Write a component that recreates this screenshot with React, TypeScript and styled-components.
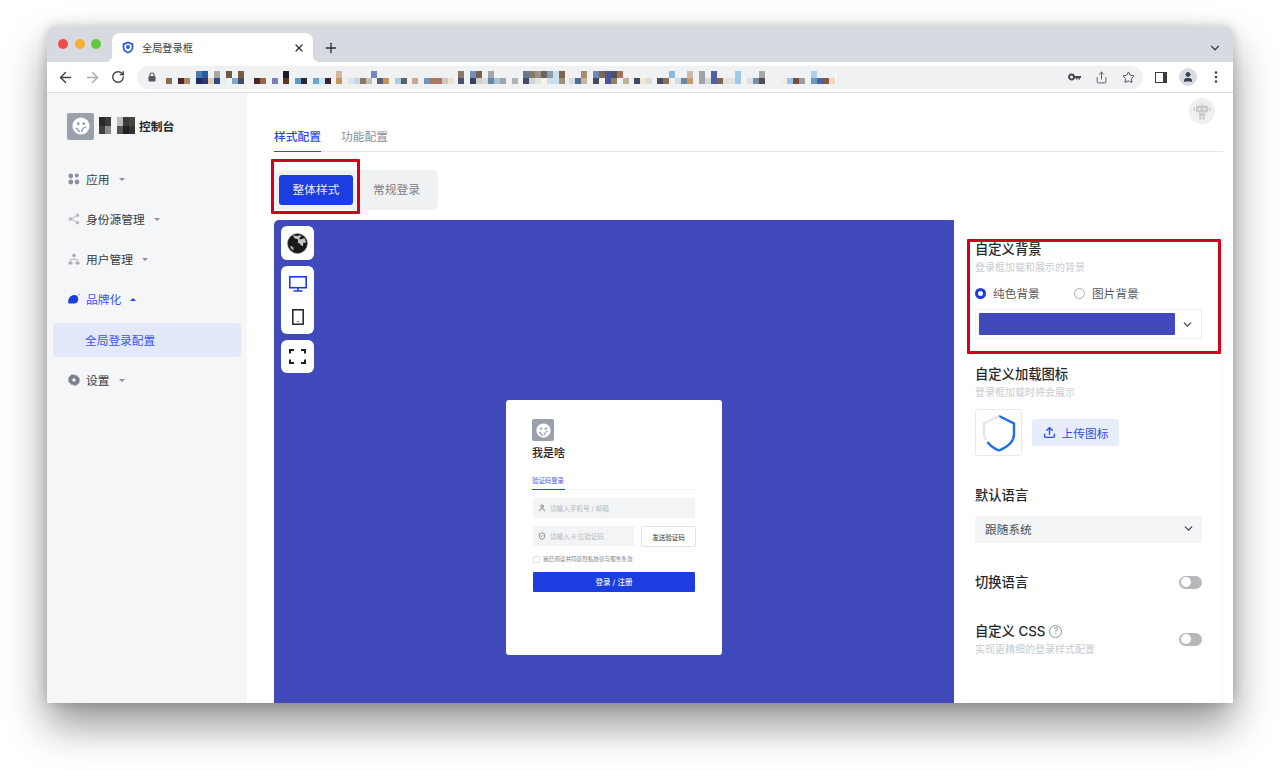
import React from 'react';
import styled, { createGlobalStyle } from 'styled-components';
import { ArrowLeft, ArrowRight, RotateCw, Share, Star, ChevronDown, Plus, X, Upload, User, ShieldCheck } from 'lucide-react';

const Global = createGlobalStyle`
  html, body { margin: 0; padding: 0; background: #fff; }
  body { font-family: "Inter", "Noto Sans CJK SC", sans-serif; }
  * { box-sizing: border-box; }
`;

const Page = styled.div`
  width: 1280px; height: 770px; padding: 27px 47px 67px; background: #fff; overflow: hidden;
`;
const Win = styled.div`
  position: relative; width: 1186px; height: 676px; border-radius: 7px 7px 0 0; overflow: hidden;
  display: flex; flex-direction: column; background: #fff;
`;
const Shadow = styled.div`
  border-radius: 7px; box-shadow: 0 22px 42px rgba(0,0,0,.42), 0 0 12px rgba(0,0,0,.2);
`;
const TabStrip = styled.div`
  height: 35px; background: #d7dae0; display: flex; align-items: flex-end; padding-left: 65px; position: relative; flex: none;
`;
const Lights = styled.div`
  position: absolute; left: 11px; top: 12px; display: flex; gap: 6.7px;
`;
const Light = styled.span<{ $c: string }>`
  width: 10px; height: 10px; border-radius: 50%; background: ${p => p.$c};
`;
const ChromeTab = styled.div`
  position: relative; width: 201px; height: 29px; background: #fff; border-radius: 8px 8px 0 0; display: flex; align-items: center;
  padding: 0 8px 0 10px; font-size: 10.2px; color: #3c4043;
  span { margin-left: 8px; flex: 1; }
  &::before, &::after { content: ''; position: absolute; bottom: 0; width: 7px; height: 7px; }
  &::before { left: -7px; background: radial-gradient(circle at 0 0, transparent 7px, #fff 7.5px); }
  &::after { right: -7px; background: radial-gradient(circle at 100% 0, transparent 7px, #fff 7.5px); }
`;
const NewTab = styled.div`
  width: 36px; height: 29px; display: flex; align-items: center; justify-content: center; color: #2b2e33;
`;
const StripEnd = styled.div`
  position: absolute; right: 11px; top: 14px; color: #3c4043; display: flex;
`;
const Toolbar = styled.div`
  height: 31px; background: #fff; border-bottom: 1px solid #dadce0; display: flex; align-items: center; padding-left: 10px; flex: none; color: #45484d;
`;
const NavBtn = styled.div<{ $dim?: boolean }>`
  width: 27px; display: flex; color: ${p => (p.$dim ? '#a9acb1' : '#3f4247')};
`;
const Omni = styled.div`
  width: 1006px; height: 23px; margin-left: -1px; border-radius: 12px; background: #eff1f3; display: flex; align-items: center; padding: 0 8px 0 11px;
`;
const Mosaic = styled.svg`
  margin-left: 8px; flex: none;
`;
const OmniRight = styled.div`
  margin-left: auto; display: flex; gap: 14px; align-items: center; color: #484b50;
`;
const Panel = styled.div`
  margin-left: 12px; display: flex; align-items: center; color: #3c4043;
`;
const PanelIcon = styled.div`
  width: 12px; height: 11px; border: 1.5px solid #3a3d42; border-right-width: 4px; background: #fff;
`;
const Avatar = styled.div`
  width: 18px; height: 18px; border-radius: 50%; background: #d9dce3; margin-left: 12px; display: flex; align-items: center; justify-content: center; color: #37404f;
`;
const Dots = styled.svg`
  margin-left: 12px; flex: none;
`;
const Body = styled.div`
  flex: 1; display: flex; min-height: 0;
`;
const Side = styled.aside`
  width: 200px; background: #f4f6f8; padding: 19px 6px 0 6px; flex: none;
`;
const Brand = styled.div`
  display: flex; align-items: center; height: 28px; padding-left: 14px; margin-bottom: 19px; font-size: 11.8px; font-weight: 700; color: #23262b;
`;
const BrandText = styled.span`
  padding-bottom: 2px;
`;
const LogoBox = styled.div<{ $s: number; $offset?: boolean }>`
  width: ${p => p.$s}px; height: ${p => p.$s}px; border-radius: 2px; background: #9ba1ab; display: flex; align-items: center; justify-content: center; flex: none;
  margin-left: ${p => (p.$offset ? '-1px' : '0')};
`;
const BrandMosaic = styled.svg`
  margin: 0 4px 0 5px;
`;
const MenuItem = styled.div<{ $active?: boolean }>`
  height: 40px; display: flex; align-items: center; padding-left: 15px; font-size: 11.75px;
  color: ${p => (p.$active ? '#3a57e8' : '#3a3d42')};
`;
const MenuText = styled.span`
  padding-bottom: 2px;
`;
const MenuIcon = styled.svg`
  width: 12px; height: 12px; margin-right: 6px; flex: none;
`;
const Caret = styled.span<{ $up?: boolean; $c?: string }>`
  width: 0; height: 0; margin-left: 9px; border-left: 3px solid transparent; border-right: 3px solid transparent;
  ${p => (p.$up ? `border-bottom: 3px solid ${p.$c || '#2a48e0'};` : `border-top: 3px solid ${p.$c || '#8a8f99'};`)}
`;
const SubItem = styled.div`
  height: 34px; margin-top: 4px; margin-bottom: 3px; border-radius: 4px; background: #e3e9fb; color: #3a57e8; font-size: 11.7px; display: flex; align-items: center; padding: 0 0 2px 32px;
`;
const Main = styled.main`
  flex: 1; min-width: 0; position: relative; padding: 34px 10px 0 27px; overflow: hidden;
`;
const RobotBadge = styled.div`
  position: absolute; right: 18px; top: 5px; width: 26px; height: 26px; border-radius: 50%; background: #f0f0f0; display: flex; align-items: center; justify-content: center;
`;
const Tabs = styled.div`
  display: flex; gap: 20px; border-bottom: 1px solid #e4e6ea; height: 25px; font-size: 11.75px; color: #8c9099;
`;
const TabLabel = styled.div<{ $active?: boolean }>`
  height: 25px; line-height: 21px; font-weight: ${p => (p.$active ? 500 : 400)};
  color: ${p => (p.$active ? '#2a48e0' : '#8c9099')};
  border-bottom: ${p => (p.$active ? '1.5px solid #2a48e0' : 'none')};
`;
const Segments = styled.div`
  display: flex; margin-top: 18px; height: 40px; padding: 5px 0 5px 5px; background: #f0f1f3; border-radius: 6px; width: 164px;
`;
const SegBtn = styled.div<{ $active?: boolean }>`
  flex: none; width: ${p => (p.$active ? 74 : 87)}px; display: flex; align-items: center; justify-content: center; border-radius: 3px; font-size: 11.75px; padding-bottom: 4px;
  background: ${p => (p.$active ? '#1c3de0' : 'transparent')}; color: ${p => (p.$active ? '#e8ecff' : '#7c8087')};
`;
const Workspace = styled.div`
  display: flex; margin-top: 10px; width: 949px; height: 615px; border-radius: 5px 5px 0 0; overflow: hidden;
`;
const Preview = styled.div`
  position: relative; width: 680px; background: #414abb; display: flex; align-items: center; justify-content: center;
`;
const ToolCol = styled.div`
  position: absolute; left: 7px; top: 6px; display: flex; flex-direction: column; gap: 6px;
`;
const ToolBtn = styled.div<{ $h?: number }>`
  width: 33px; height: ${p => p.$h || 34}px; background: #fff; border-radius: 6px; display: flex; flex-direction: column; align-items: center; justify-content: center;
`;
const DeviceStack = styled.div`
  display: flex; flex-direction: column; align-items: center; gap: 17px;
`;
const Card = styled.div`
  width: 216px; height: 255px; background: #fff; border-radius: 3px; padding: 19px 26px 0 27px;
`;
const CardTitle = styled.div`
  margin: 4px 0 0 -1px; font-size: 11px; font-weight: 500; color: #1f2126; line-height: 16px; height: 16px;
`;
const CardTab = styled.div`
  margin: 9px 0 0 -1px; height: 20px; border-bottom: 1px solid #f3f4f6; font-size: 6.4px; color: #4a5ae6; white-space: nowrap;
  span { display: inline-block; height: 20px; line-height: 23px; border-bottom: 1px solid #2a48e0; width: 33px; }
`;
const CardInput = styled.div<{ $w?: number }>`
  width: ${p => p.$w || 162}px; height: 20px; background: #f3f4f6; border-radius: 1px; display: flex; align-items: center; padding-left: 5px; gap: 4px;
  font-size: 6.6px; color: #b6b9bf; flex: none;
`;
const CardRow = styled.div`
  display: flex; gap: 7px; margin-top: 8px;
`;
const SendBtn = styled.div`
  width: 55px; height: 21px; border: 1px solid #e2e3e6; border-radius: 2px; display: flex; align-items: center; justify-content: center; font-size: 6.5px; color: #33363b; flex: none;
`;
const FirstInput = styled(CardInput)`
  margin-top: 8px;
`;
const Agree = styled.div`
  margin-top: 8px; height: 8px; display: flex; align-items: center; gap: 3px; font-size: 5.6px; color: #7d8087;
`;
const Check = styled.span`
  width: 7px; height: 7px; border: 1px solid #e2e3e6; border-radius: 1px; background: #fff;
`;
const CardSubmit = styled.div`
  margin-top: 9px; width: 162px; height: 20px; background: #1c3de0; border-radius: 1px; color: #f0f2ff; font-size: 7.5px; font-weight: 500; display: flex; align-items: center; justify-content: center; padding-bottom: 1px;
`;
const Settings = styled.div`
  flex: 1; background: #fff; border-right: 1px solid #f4f5f7; padding: 20px 20px 0 21px; position: relative;
`;
const Section = styled.section<{ $mt?: number }>`
  margin-top: ${p => p.$mt || 0}px;
`;
const H = styled.div`
  font-size: 13.3px; font-weight: 500; color: #25282d; line-height: 18px; height: 18px; display: flex; align-items: center; gap: 4px;
`;
const Hint = styled.div`
  margin-top: 2px; font-size: 10px; color: #c8cbd1; line-height: 14px; height: 14px;
`;
const Radios = styled.div`
  display: flex; margin-top: 12px; height: 14px; align-items: center; font-size: 11.7px; color: #55585e;
`;
const Radio = styled.span<{ $on?: boolean }>`
  width: 11px; height: 11px; border-radius: 50%; flex: none; margin-right: 7px; background: #fff;
  border: ${p => (p.$on ? '3px solid #1c3de0' : '1px solid #a8abb3')};
`;
const RadioLabel = styled.span`
  width: 81px; height: 14px; line-height: 16px;
`;
const ColorSelect = styled.div`
  margin-top: 9px; height: 30px; border: 1px solid #eceef1; border-radius: 3px; display: flex; align-items: center; padding: 0 7px 0 3px; color: #3c4250; justify-content: space-between;
`;
const Swatch = styled.div`
  width: 196px; height: 22px; background: #414abb; border-radius: 1px;
`;
const UploadRow = styled.div`
  display: flex; align-items: center; gap: 10px; margin-top: 10px;
`;
const IconBox = styled.div`
  width: 47px; height: 47px; border: 1px solid #e8e9ec; border-radius: 3px; display: flex; align-items: center; justify-content: center;
`;
const UploadBtn = styled.div`
  width: 87px; height: 27px; border-radius: 3px; background: #e8edfb; color: #2f4de2; font-size: 11.7px; display: flex; align-items: center; justify-content: center; gap: 6px; padding-bottom: 1px;
`;
const LangSelect = styled.div`
  margin-top: 12px; height: 27px; background: #f4f5f7; border-radius: 3px; display: flex; align-items: center; justify-content: space-between; padding: 0 7px 2px 10px; font-size: 11.7px; color: #4a4d53;
`;
const SwitchRow = styled.div<{ $mt: number }>`
  margin-top: ${p => p.$mt}px; display: flex; align-items: center; justify-content: space-between;
`;
const Toggle = styled.span`
  width: 23px; height: 13px; border-radius: 7px; background: #b6b7ba; position: relative; display: block;
  &::after { content: ''; position: absolute; left: 1.5px; top: 1.5px; width: 10px; height: 10px; border-radius: 50%; background: #fff; }
`;
const Help = styled.span`
  width: 13px; height: 13px; border: 1px solid #8d9096; border-radius: 50%; font-size: 8.5px; color: #8d9096; display: inline-flex; align-items: center; justify-content: center; font-weight: 400;
`;
const RedFrame = styled.div<{ $l: number; $t: number; $w: number; $h: number }>`
  position: absolute; left: ${p => p.$l}px; top: ${p => p.$t}px; width: ${p => p.$w}px; height: ${p => p.$h}px;
  border: 3px solid #d0021b; border-radius: 1px; pointer-events: none;
`;

const Face = ({ s }: { s: number }) => (
  <svg width={s} height={s} viewBox="0 0 20 20">
    <circle cx="10" cy="10" r="9.5" fill="#fff" />
    <circle cx="7" cy="7.5" r="1.6" fill="#9ba1ab" />
    <circle cx="13" cy="7.5" r="1.6" fill="#9ba1ab" />
    <path d="M4 12.5c2 .3 3.5 1.3 4.2 4.5M16 11c-3 .3-5 2-5.2 5.8" fill="none" stroke="#9ba1ab" strokeWidth="1.6" />
  </svg>
);

const ShieldFav = () => (
  <svg width="12" height="13" viewBox="0 0 12 13">
    <path d="M6 .5 11.3 2.4v4.2c0 2.9-2.2 4.9-5.3 5.9C2.900 11.500.7 9.500.7 6.600V2.400Z" fill="#2557e6" />
    <path d="M6 2.400 9.600 3.700v2.900c0 2-1.500 3.400-3.600 4.100-2.100-.7-3.600-2.100-3.600-4.100V3.700Z" fill="#fff" />
    <circle cx="6" cy="6" r="1.900" fill="#2557e6" />
  </svg>
);

const LockGlyph = () => (
  <svg width="8" height="10" viewBox="0 0 8 10" style={{ flex: 'none' }}>
    <path d="M2 4.500V3a2 2 0 0 1 4 0v1.500" fill="none" stroke="#55585d" strokeWidth="1.100" />
    <rect x="0.500" y="4" width="7" height="5.500" rx="1" fill="#55585d" />
  </svg>
);

const KeyGlyph = () => (
  <svg width="13" height="8" viewBox="0 0 13 8" fill="#484b50">
    <path fillRule="evenodd" d="M3.500.5a3.500 3.500 0 1 1-3.300 4.600A3.500 3.500 0 0 1 3.500.5Zm0 2a1.500 1.500 0 1 0 0 3 1.500 1.500 0 0 0 0-3Z" />
    <path d="M6.500 3H13v2h-1v1.500h-1.500V5H9.500v1.500H8V5H6.500Z" />
  </svg>
);

const Globe = () => (
  <svg width="21" height="21" viewBox="0 0 21 21">
    <circle cx="10.500" cy="10.500" r="10" fill="#181818" stroke="#8c8c8c" strokeWidth=".6" />
    <path d="M6 2.200c2 .5 3.400 1.200 4.300.8.900-.4 2.600-.9 4.100-.3-.7 1.500-2 1.700-1.900 3 .1 1 1.300 1 2 .3l3-.7c1 1.600 1.300 3.100 1.200 4.600-1 .6-1.600-.5-2.400.2-.8.700.5 2-.4 2.600-.8.500-1.700-.1-2.400-1.200-.8-1.200-2-1-2.600-2.200-.4-1 .6-1.600.2-2.500-.5-1-2.100-.3-3-1.200C7.300 4.700 6.300 3.700 6 2.200Z" fill="#c4c4c4" />
    <path d="M3 13c1.300-.3 2.700.3 3.400 1.400.6 1-.1 2-.1 3.300C4.700 16.700 3.500 15 3 13Z" fill="#a8a8a8" />
  </svg>
);

const MonitorGlyph = () => (
  <svg width="18" height="16" viewBox="0 0 18 16" fill="none" stroke="#1c3de0" strokeWidth="1.600">
    <rect x="0.800" y="0.800" width="16.400" height="10.900" />
    <path d="M9 11.700V15M4.500 15h9" />
  </svg>
);

const TabletGlyph = () => (
  <svg width="12" height="16" viewBox="0 0 12 16" fill="none" stroke="#1d1f22" strokeWidth="1.500">
    <rect x="0.800" y="0.800" width="10.400" height="14.400" />
    <circle cx="6" cy="12.500" r=".7" fill="#1d1f22" stroke="none" />
  </svg>
);

const Frame = () => (
  <svg width="17" height="15" viewBox="0 0 17 15" fill="none" stroke="#1d1f22" strokeWidth="2">
    <path d="M1 4.500V1h4M12 1h4v3.500M16 10.500V14h-4M5 14H1v-3.500" />
  </svg>
);

const Robot = () => (
  <svg width="18" height="18" viewBox="0 0 18 18" fill="#c9cbcd">
    <rect x="8.500" y="0.500" width="1" height="3" />
    <rect x="3" y="3.500" width="12" height="7" rx="1" />
    <rect x="0.500" y="5" width="1.500" height="4" />
    <rect x="16" y="5" width="1.500" height="4" />
    <rect x="6" y="11" width="6" height="3.500" />
    <rect x="6" y="15" width="2.500" height="2.500" />
    <rect x="9.500" y="15" width="2.500" height="2.500" />
    <circle cx="6.500" cy="7" r="1.100" fill="#f0f0f0" />
    <circle cx="11.500" cy="7" r="1.100" fill="#f0f0f0" />
  </svg>
);

const AppsIcon = () => (
  <MenuIcon viewBox="0 0 12 12" fill="#8b90a0">
    <circle cx="2.800" cy="3" r="2.400" /><circle cx="8.800" cy="2.600" r="2" /><circle cx="2.800" cy="9" r="2.400" /><circle cx="9" cy="9" r="2.400" />
  </MenuIcon>
);
const ShareIcon = () => (
  <MenuIcon viewBox="0 0 12 12" fill="none" stroke="#b5b9c2" strokeWidth="1">
    <path d="M9 2.500 3 6l6 3.500" />
    <circle cx="9.500" cy="2.300" r="1.300" fill="#b5b9c2" /><circle cx="2.500" cy="6" r="1.400" fill="#b5b9c2" /><circle cx="9.500" cy="9.700" r="1.300" fill="#b5b9c2" />
  </MenuIcon>
);
const OrgIcon = () => (
  <MenuIcon viewBox="0 0 12 12" fill="#a8acb6">
    <circle cx="6" cy="2.500" r="1.800" />
    <path d="M5.600 4.500h.8V6h3.300v2h-.8V6.800H2.900V8h-.8V6h3.500Z" />
    <rect x="0.500" y="8.500" width="4" height="3" rx="1" /><rect x="7.500" y="8.500" width="4" height="3" rx="1" />
  </MenuIcon>
);
const BrandIcon = () => (
  <MenuIcon viewBox="0 0 12 12" fill="#1c3de0">
    <path d="M.5 10.500c-1-3 .5-7.500 5-8.500 3-.5 5 1.500 4.700 4.500-.3 2.700-1.800 4-3.700 4Z" />
    <circle cx="11" cy="1.500" r="1" fill="#a8b4ee" />
  </MenuIcon>
);
const GearIcon = () => (
  <MenuIcon viewBox="0 0 12 12" fill="#7b808d">
    <path fillRule="evenodd" d="M6 .3 7.300 1.500l1.800-.2.700 1.700 1.700.7-.2 1.800L12 6l-.7 1.300.2 1.800-1.700.7-.7 1.700-1.800-.2L6 11.700 4.700 10.500l-1.800.2-.7-1.700L.5 8.300l.2-1.800L0 6l.7-1.300L.5 2.900l1.700-.7.7-1.700 1.800.2ZM6 4.300a1.700 1.700 0 1 0 0 3.400 1.700 1.700 0 0 0 0-3.400Z" />
  </MenuIcon>
);

type Cell = [number, number, number, number, string];
const url: Cell[] = [
  [166,78,6,6,'#8a6a4c'],[178,78,6,6,'#4a2a28'],[184,78,6,6,'#b08860'],
  [196,71,6,7,'#4a78b0'],[202,71,6,7,'#2a5aa0'],[196,78,6,6,'#1c2c58'],[202,78,6,6,'#2a3a70'],[208,78,6,6,'#e4cca8'],
  [214,71,6,7,'#a8a8a8'],[214,78,6,6,'#2a4a90'],[220,78,6,6,'#e8ecf0'],[226,71,6,7,'#6a5a48'],[232,78,6,6,'#80a8c8'],[238,71,6,7,'#7a5c40'],[238,78,6,6,'#404c6c'],
  [254,78,6,6,'#4a2428'],[260,78,6,6,'#9c6448'],[272,78,6,6,'#7880b8'],
  [283,71,6,7,'#1a1c28'],[283,78,6,6,'#5c3424'],[295,78,6,6,'#5c98c8'],[301,78,6,6,'#2c2830'],[313,78,6,6,'#6aa4d0'],[319,78,6,6,'#cde4f0'],[325,78,6,6,'#382430'],
  [336,71,6,7,'#d0b898'],[336,78,6,6,'#c09858'],[348,78,6,6,'#dce4ec'],[354,78,6,6,'#c8d8e8'],[360,78,6,6,'#8c7868'],[366,78,6,6,'#c8bcac'],
  [371,71,6,7,'#6c88bc'],[377,78,6,6,'#5c5c70'],[383,78,6,6,'#c0945c'],[395,78,6,6,'#a8cce4'],[401,78,6,6,'#606068'],
  [412,78,6,6,'#c8a890'],[424,78,6,6,'#7094c0'],[430,78,12,6,'#a87860'],[442,78,6,6,'#d0c8b8'],[448,78,6,6,'#ece4cc'],[458,71,6,7,'#8c7868'],[458,78,6,6,'#4c5070'],
  [470,71,6,7,'#7090c0'],[476,71,6,7,'#786048'],[470,78,6,6,'#3c4058'],[476,78,6,6,'#ccd0d0'],[482,78,6,6,'#dcdcd8'],
  [488,71,6,7,'#a0a8a8'],[488,78,6,6,'#6488ac'],[494,78,6,6,'#a8c4d4'],[500,78,6,6,'#a0a4a8'],[512,78,6,6,'#b0b4b0'],
  [523,71,6,7,'#647890'],[529,71,6,7,'#887868'],[535,71,6,7,'#9c9488'],[541,71,6,7,'#6c6060'],[547,71,6,7,'#8c9cb0'],[553,71,6,7,'#c8e0ec'],[559,71,6,7,'#7c6450'],
  [523,78,6,6,'#444868'],[529,78,6,6,'#d0d4d4'],[535,78,6,6,'#e4e4e0'],[541,78,6,6,'#f4f4e8'],[547,78,6,6,'#c8e0ec'],[553,78,6,6,'#c8e0ec'],[559,78,6,6,'#a09078'],
  [569,78,6,6,'#d0dce4'],[575,78,6,6,'#4c6c90'],[581,71,6,7,'#b08870'],[581,78,6,6,'#c8b498'],
  [593,71,6,7,'#7088b8'],[599,71,6,7,'#7c6850'],[605,71,6,7,'#4c5498'],[611,71,6,7,'#505058'],[617,71,6,7,'#a47058'],
  [593,78,6,6,'#444858'],[605,78,6,6,'#4c5498'],[611,78,6,6,'#8c8068'],[623,78,6,6,'#c0b098'],
  [634,78,6,6,'#404868'],[640,78,6,6,'#f0e8cc'],[646,78,6,6,'#e0dcd0'],
  [657,78,6,6,'#484c5c'],[663,78,6,6,'#887058'],[669,71,6,7,'#88b8e0'],[675,78,6,6,'#d0dce4'],[681,78,6,6,'#6c88a0'],[687,71,6,7,'#d0b8a8'],[687,78,6,6,'#c89c60'],
  [699,71,6,7,'#a0a4a4'],[699,78,6,6,'#a0a4a4'],[705,78,6,6,'#d4d8d8'],[711,71,6,7,'#5060a0'],[711,78,6,6,'#5060a0'],[717,78,6,6,'#806850'],
  [723,78,6,6,'#e0e4dc'],[729,78,6,6,'#e0e4dc'],[735,71,6,7,'#a0c8e8'],[735,78,6,6,'#a0c8e8'],
  [747,78,6,6,'#dce0e4'],[753,78,6,6,'#7890a4'],[759,71,6,7,'#a8a8a8'],[759,78,6,6,'#584c54'],
  [781,78,6,6,'#f0eedc'],[787,78,6,6,'#98c4e8'],[793,78,6,6,'#784c3c'],[799,78,6,6,'#9c9c98'],
  [811,71,6,7,'#a8d0ec'],[811,78,6,6,'#7098bc'],[817,78,6,6,'#5064a0'],[823,78,6,6,'#885840'],[829,78,6,6,'#ecd8bc'],
  [835,71,1,13,'#f8f9fa'],
];

const App = () => (
  <>
    <Global />
    <Page>
      <Shadow>
        <Win>
          <TabStrip>
            <Lights>
              <Light $c="#ee4b4b" /><Light $c="#f5b02f" /><Light $c="#62c740" />
            </Lights>
            <ChromeTab>
              <ShieldFav /><span>全局登录框</span><X size={12} strokeWidth={2.400} color="#2b2e33" />
            </ChromeTab>
            <NewTab><Plus size={16} strokeWidth={2} /></NewTab>
            <StripEnd><ChevronDown size={14} strokeWidth={2.200} /></StripEnd>
          </TabStrip>
          <Toolbar>
            <NavBtn><ArrowLeft size={17} strokeWidth={2} /></NavBtn>
            <NavBtn $dim><ArrowRight size={17} strokeWidth={2} /></NavBtn>
            <NavBtn><RotateCw size={14} strokeWidth={2.400} /></NavBtn>
            <Omni>
              <LockGlyph />
              <Mosaic width="680" height="16" viewBox="164 69 680 16">
                {url.map((c, i) => <rect key={i} x={c[0]} y={c[1]} width={c[2]} height={c[3]} fill={c[4]} />)}
              </Mosaic>
              <OmniRight>
                <KeyGlyph />
                <Share size={13} strokeWidth={1.600} />
                <Star size={13} strokeWidth={1.800} />
              </OmniRight>
            </Omni>
            <Panel><PanelIcon /></Panel>
            <Avatar><User size={12} fill="#37404f" strokeWidth={2} /></Avatar>
            <Dots width="14" height="14" viewBox="0 0 14 14" fill="#3c4043">
              <circle cx="7" cy="2.500" r="1.300" /><circle cx="7" cy="7" r="1.300" /><circle cx="7" cy="11.500" r="1.300" />
            </Dots>
          </Toolbar>
          <Body>
            <Side>
              <Brand>
                <LogoBox $s={27}><Face s={18} /></LogoBox>
                <BrandMosaic width="36" height="18" viewBox="0 0 36 18">
                  <rect x="0" y="0" width="6" height="9" fill="#2a2a2a" /><rect x="6" y="0" width="6" height="9" fill="#3c3c3c" />
                  <rect x="0" y="9" width="6" height="8" fill="#404040" /><rect x="6" y="9" width="6" height="8" fill="#8c8c8c" />
                  <rect x="18" y="0" width="6" height="9" fill="#bcbcbc" /><rect x="24" y="0" width="6" height="9" fill="#3a3a3a" /><rect x="30" y="0" width="6" height="9" fill="#444" />
                  <rect x="18" y="9" width="6" height="8" fill="#555" /><rect x="24" y="9" width="6" height="8" fill="#222" /><rect x="30" y="9" width="6" height="8" fill="#333" />
                </BrandMosaic>
                <BrandText>控制台</BrandText>
              </Brand>
              <MenuItem><AppsIcon /><MenuText>应用</MenuText><Caret /></MenuItem>
              <MenuItem><ShareIcon /><MenuText>身份源管理</MenuText><Caret /></MenuItem>
              <MenuItem><OrgIcon /><MenuText>用户管理</MenuText><Caret /></MenuItem>
              <MenuItem $active><BrandIcon /><MenuText>品牌化</MenuText><Caret $up /></MenuItem>
              <SubItem>全局登录配置</SubItem>
              <MenuItem><GearIcon /><MenuText>设置</MenuText><Caret /></MenuItem>
            </Side>
            <Main>
              <RobotBadge><Robot /></RobotBadge>
              <Tabs>
                <TabLabel $active>样式配置</TabLabel>
                <TabLabel>功能配置</TabLabel>
              </Tabs>
              <Segments>
                <SegBtn $active>整体样式</SegBtn>
                <SegBtn>常规登录</SegBtn>
              </Segments>
              <Workspace>
                <Preview>
                  <ToolCol>
                    <ToolBtn><Globe /></ToolBtn>
                    <ToolBtn $h={68}>
                      <DeviceStack>
                        <MonitorGlyph />
                        <TabletGlyph />
                      </DeviceStack>
                    </ToolBtn>
                    <ToolBtn $h={33}><Frame /></ToolBtn>
                  </ToolCol>
                  <Card>
                    <LogoBox $s={22} $offset><Face s={15} /></LogoBox>
                    <CardTitle>我是啥</CardTitle>
                    <CardTab><span>验证码登录</span></CardTab>
                    <FirstInput>
                      <User size={8} color="#5a5d63" />请输入手机号 / 邮箱
                    </FirstInput>
                    <CardRow>
                      <CardInput $w={101}>
                        <ShieldCheck size={8} color="#5a5d63" />请输入 6 位验证码
                      </CardInput>
                      <SendBtn>发送验证码</SendBtn>
                    </CardRow>
                    <Agree><Check />我已阅读并同意隐私协议与服务条款</Agree>
                    <CardSubmit>登录 / 注册</CardSubmit>
                  </Card>
                </Preview>
                <Settings>
                  <Section>
                    <H>自定义背景</H>
                    <Hint>登录框加载和展示的背景</Hint>
                    <Radios>
                      <Radio $on /><RadioLabel>纯色背景</RadioLabel>
                      <Radio /><RadioLabel>图片背景</RadioLabel>
                    </Radios>
                    <ColorSelect>
                      <Swatch /><ChevronDown size={13} strokeWidth={2.400} />
                    </ColorSelect>
                  </Section>
                  <Section $mt={26}>
                    <H>自定义加载图标</H>
                    <Hint>登录框加载时将会展示</Hint>
                    <UploadRow>
                      <IconBox>
                        <svg width="34" height="38" viewBox="0 0 34 38" fill="none" strokeWidth="2.400">
                          <path d="M17 2 32 9.500v11c0 7.500-5.500 12-15 16-5.500-2.200-9-5-11.500-8.500" stroke="#1f6fe8" />
                          <path d="M4 25.500C2.700 23.500 2 22 2 20.500v-11L17 2" stroke="#e3e5e9" />
                        </svg>
                      </IconBox>
                      <UploadBtn><Upload size={13} strokeWidth={2.600} />上传图标</UploadBtn>
                    </UploadRow>
                  </Section>
                  <Section $mt={30}>
                    <H>默认语言</H>
                    <LangSelect>跟随系统<ChevronDown size={13} strokeWidth={2.400} color="#3c4250" /></LangSelect>
                  </Section>
                  <SwitchRow $mt={30}>
                    <H>切换语言</H><Toggle />
                  </SwitchRow>
                  <SwitchRow $mt={31}>
                    <div>
                      <H>自定义 CSS<Help>?</Help></H>
                      <Hint>实现更精细的登录样式配置</Hint>
                    </div>
                    <Toggle />
                  </SwitchRow>
                </Settings>
              </Workspace>
            </Main>
          </Body>
          <RedFrame $l={224} $t={132} $w={89} $h={55} />
          <RedFrame $l={920} $t={212} $w={254} $h={115} />
        </Win>
      </Shadow>
    </Page>
  </>
);

export default App;
